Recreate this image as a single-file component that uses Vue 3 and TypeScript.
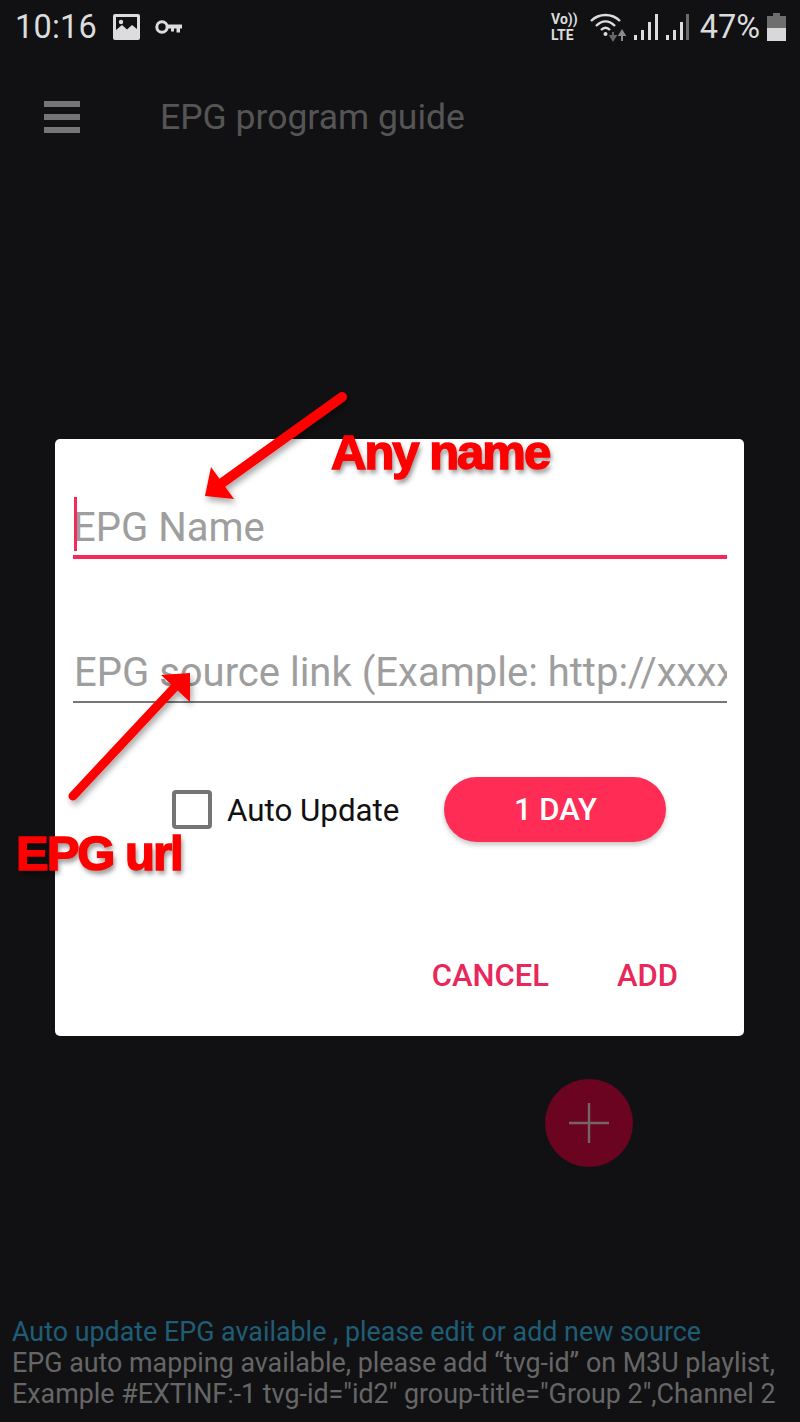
<script setup lang="ts">
const frame = { width: 800, height: 1422 }
</script>

<template>
  <div class="screen">
    <div class="status">
      <div class="status-left">
        <span class="time">10:16</span>
        <svg class="ico-img" width="27" height="26" viewBox="0 0 27 26">
          <rect x="0" y="0" width="27" height="26" rx="2" fill="#dcdcdc" />
          <rect x="3" y="3" width="21" height="20" fill="#111113" />
          <path d="M3 23V16L9 11L14 15.5L19 11L24 15V23Z" fill="#dcdcdc" />
          <circle cx="8" cy="8" r="2.2" fill="#dcdcdc" />
        </svg>
        <svg class="ico-key" width="27" height="16" viewBox="0 0 27 16">
          <circle cx="7" cy="8" r="5.200" fill="none" stroke="#dcdcdc" stroke-width="3" />
          <path d="M12 5.500H27V9.500H25V13.500H21.500V9.500H19V12.500H16V9.500H12Z" fill="#dcdcdc" />
        </svg>
      </div>
      <div class="status-right">
        <div class="volte"><span>Vo))</span><span>LTE</span></div>
        <svg class="wifi" width="37" height="30" viewBox="0 0 37 30">
          <path d="M1 9C9 1 22 1 30 9" fill="none" stroke="#dcdcdc" stroke-width="2.4" />
          <path d="M6 14C12 8 19 8 25 14" fill="none" stroke="#dcdcdc" stroke-width="2.4" />
          <path d="M11 18C14 15 17 15 20 18" fill="none" stroke="#dcdcdc" stroke-width="2.4" />
          <circle cx="15.500" cy="22" r="2" fill="#dcdcdc" />
          <path d="M23 20V26M20.500 24L23 28L25.500 24Z" stroke="#666" stroke-width="2" fill="#666" />
          <path d="M32 29V21M29.500 23L32 19L34.500 23Z" stroke="#8a8a8a" stroke-width="2" fill="#8a8a8a" />
        </svg>
        <svg width="25" height="28" viewBox="0 0 25 28">
          <rect x="0" y="22" width="3" height="5" fill="#dcdcdc" />
          <rect x="7" y="17" width="3" height="10" fill="#dcdcdc" />
          <rect x="14" y="9" width="3" height="18" fill="#dcdcdc" />
          <rect x="21" y="1" width="3" height="26" fill="#dcdcdc" />
        </svg>
        <svg width="24" height="28" viewBox="0 0 24 28">
          <rect x="0" y="22" width="3" height="5" fill="#dcdcdc" />
          <rect x="7" y="17" width="3" height="10" fill="#dcdcdc" />
          <rect x="14" y="9" width="3" height="18" fill="#dcdcdc" />
          <rect x="20" y="1" width="3" height="26" fill="#6b6b6b" />
        </svg>
        <span class="pct">47%</span>
        <svg width="19" height="28" viewBox="0 0 19 28">
          <rect x="6" y="0" width="7" height="3" fill="#6e6e6e" />
          <rect x="0" y="3" width="19" height="12" fill="#6e6e6e" />
          <rect x="0" y="15" width="19" height="13" fill="#d8d8d8" />
        </svg>
      </div>
    </div>

    <div class="toolbar">
      <div class="burger"><i></i><i></i><i></i></div>
      <span class="title">EPG program guide</span>
    </div>

    <div class="notes">
      <p class="note-blue">Auto update EPG available , please edit or add new source</p>
      <p>EPG auto mapping available, please add “tvg-id” on M3U playlist,</p>
      <p>Example #EXTINF:-1 tvg-id="id2" group-title="Group 2",Channel 2</p>
    </div>

    <button class="fab" type="button" aria-label="Add">
      <svg width="40" height="40" viewBox="0 0 40 40">
        <path d="M20 0V40M0 20H40" stroke="#77636a" stroke-width="2.400" />
      </svg>
    </button>

    <div class="dialog">
      <div class="field active">
        <span class="caret"></span>
        <span class="ph">EPG Name</span>
      </div>
      <div class="field second">
        <span class="ph">EPG source link (Example: http://xxxx</span>
      </div>
      <div class="options">
        <label class="check"><span class="box"></span><span class="check-label">Auto Update</span></label>
        <button class="pill" type="button">1 DAY</button>
      </div>
      <div class="actions">
        <button type="button">CANCEL</button>
        <button type="button">ADD</button>
      </div>
    </div>

    <svg class="arrows" :width="frame.width" :height="frame.height" :viewBox="`0 0 ${frame.width} ${frame.height}`">
      <defs>
        <filter id="soft" x="-20%" y="-20%" width="140%" height="140%">
          <feDropShadow dx="2" dy="4" stdDeviation="3" flood-color="#000" flood-opacity="0.35" />
        </filter>
      </defs>
      <g filter="url(#soft)" fill="#fe0000" stroke="none">
        <path d="M342 397L222 483" stroke="#fe0000" stroke-width="10" stroke-linecap="round" />
        <path d="M205 496L211 467L234 499Z" />
        <path d="M73 796L174 688" stroke="#fe0000" stroke-width="9" stroke-linecap="round" />
        <path d="M190 673L161 675L190 702Z" />
      </g>
    </svg>
    <span class="tag tag-name">Any name</span>
    <span class="tag tag-url">EPG url</span>
  </div>
</template>

<style scoped>
.screen {
  position: relative;
  width: 800px;
  height: 1422px;
  overflow: hidden;
  display: flex;
  flex-direction: column;
  background: #111113;
  font-family: Roboto, "Liberation Sans", sans-serif;
}
.status {
  height: 54px;
  display: flex;
  align-items: center;
  justify-content: space-between;
  padding: 0 14px 0 15px;
}
.status-left, .status-right { display: flex; align-items: center; }
.time { font-size: 32.500px; color: #dcdcdc; letter-spacing: 0.2px; }
.ico-img { margin-left: 16px; }
.ico-key { margin-left: 15px; }
.status-right { gap: 7px; }
.wifi { margin-left: 5px; }
.volte {
  display: flex;
  flex-direction: column;
  font-size: 14px;
  line-height: 16px;
  font-weight: 700;
  color: #dcdcdc;
  padding-left: 1px;
}
.pct { font-size: 32.500px; color: #dcdcdc; margin-left: 3px; }
.toolbar {
  display: flex;
  align-items: center;
  height: 72px;
  margin-top: 27px;
  padding-left: 44px;
}
.burger {
  width: 36px;
  display: flex;
  flex-direction: column;
  gap: 7px;
}
.burger i { display: block; height: 6px; background: #757575; }
.title { margin-left: 80px; font-size: 35.500px; color: #555; }
.notes {
  margin-top: auto;
  padding: 0 0 12px 12px;
  font-size: 26.850px;
  line-height: 31px;
  color: #666;
  white-space: nowrap;
}
.notes p { margin: 0; }
.note-blue { color: #1f5d77; }
.fab {
  position: absolute;
  left: 545px;
  top: 1079px;
  width: 88px;
  height: 88px;
  padding: 0;
  border: 0;
  border-radius: 50%;
  background: #6b0420;
  display: flex;
  align-items: center;
  justify-content: center;
}
.dialog {
  position: absolute;
  left: 55px;
  top: 439px;
  width: 689px;
  height: 597px;
  box-sizing: border-box;
  padding: 0 17px 0 18px;
  background: #fff;
  border-radius: 5px;
  display: flex;
  flex-direction: column;
}
.field {
  position: relative;
  overflow: hidden;
  display: flex;
  align-items: center;
  border-bottom: 2px solid #757575;
  white-space: nowrap;
}
.field.active {
  margin-top: 58px;
  height: 58px;
  padding-top: 2px;
  box-sizing: content-box;
  height: 56px;
  border-bottom: 4px solid #f4285a;
}
.field.second { margin-top: 87px; height: 55px; padding: 0 0 2px 1px; box-sizing: border-box; height: 57px; }
.ph { font-size: 40px; color: #9e9e9e; }
.caret {
  position: absolute;
  left: 1px;
  top: 0;
  width: 3px;
  height: 54px;
  background: #f4285a;
}
.options {
  display: flex;
  align-items: center;
  margin-top: 74px;
  padding-left: 99px;
}
.check {
  display: flex;
  align-items: center;
  gap: 15px;
  font-size: 31.300px;
  color: #111;
}
.check-label { padding-top: 2px; }
.box {
  width: 40px;
  height: 39px;
  box-sizing: border-box;
  border: 4px solid #757575;
  border-radius: 4px;
}
.pill {
  margin-left: 45px;
  width: 222px;
  height: 65px;
  border: 0;
  border-radius: 33px;
  background: #ff2d55;
  color: #fff;
  font: 500 31px Roboto, "Liberation Sans", sans-serif;
  box-shadow: 0 3px 5px rgba(0, 0, 0, 0.22);
}
.actions {
  display: flex;
  justify-content: flex-end;
  gap: 68px;
  margin-top: 116px;
  padding-right: 49px;
}
.actions button {
  padding: 0;
  border: 0;
  background: none;
  color: #e8285a;
  font: 500 31px/36px Roboto, "Liberation Sans", sans-serif;
}
.arrows {
  position: absolute;
  left: 0;
  top: 0;
  pointer-events: none;
}
.tag {
  position: absolute;
  color: #fe0000;
  font-family: "Liberation Sans", Arial, sans-serif;
  font-weight: 700;
  font-size: 49px;
  line-height: 54px;
  letter-spacing: -2px;
  -webkit-text-stroke: 1.500px #fe0000;
  text-shadow: 2px 4px 5px rgba(0, 0, 0, 0.45);
  white-space: nowrap;
}
.tag-name { left: 331px; top: 425px; }
.tag-url { left: 16px; top: 826px; }
</style>
